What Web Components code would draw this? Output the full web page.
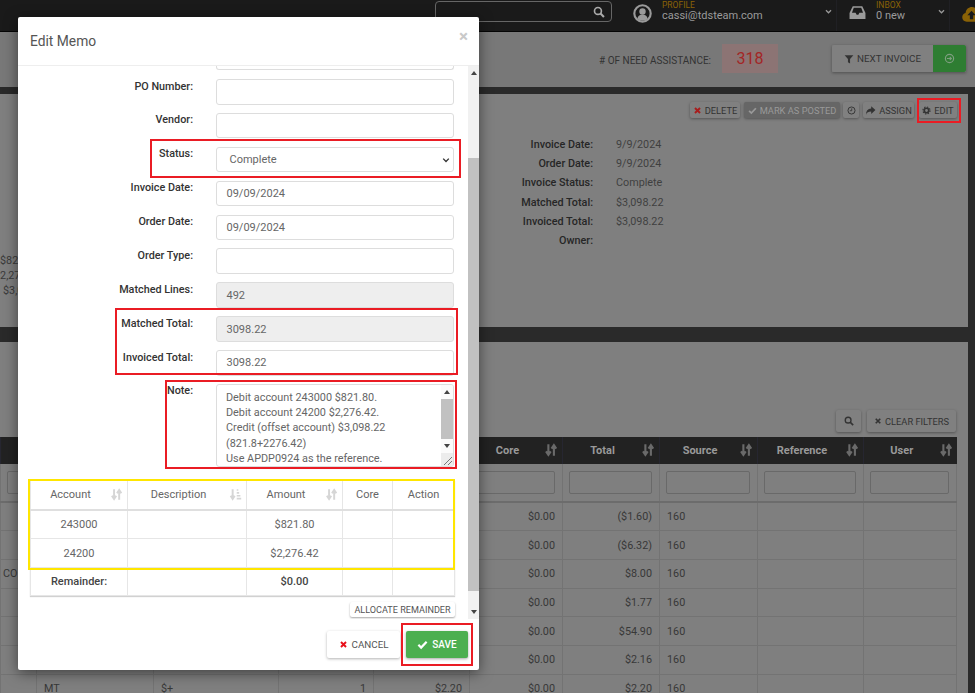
<!DOCTYPE html>
<html lang="en">
<head>
<meta charset="utf-8">
<title>Edit Memo</title>
<style>
    html, body { margin: 0; height: 693px; overflow: hidden; background: #2a2a2a; }
    body { font: 400 10.8px Roboto, "Liberation Sans", sans-serif; color: #3a3a3a; position: relative; }
</style>
</head>
<body>
<app-nav></app-nav>
<need-header></need-header>
<invoice-card></invoice-card>
<lines-card></lines-card>
<memo-modal></memo-modal>

<note-mark x="150" y="139" w="311" h="39"></note-mark>
<note-mark x="115" y="308" w="343" h="67"></note-mark>
<note-mark x="165" y="380" w="292" h="89"></note-mark>
<note-mark x="401" y="623" w="72" h="43"></note-mark>
<note-mark x="917" y="98" w="44" h="25"></note-mark>
<note-mark x="28" y="479" w="427" h="91" color="#ffe600"></note-mark>

<script>
const ICONS = {
    times: '<path d="M3.5 3.5l9 9M12.5 3.5l-9 9" fill="none" stroke="currentColor" stroke-width="3.4"/>',
    check: '<path d="M2 8.5l4 4 8-8.5" fill="none" stroke="currentColor" stroke-width="3.2"/>',
    filter: '<path d="M1 2h14L9.7 8v7.2L6.3 13V8z" fill="currentColor"/>',
    search: '<circle cx="6.6" cy="6.6" r="4.6" fill="none" stroke="currentColor" stroke-width="2.2"/><path d="M10 10l4.6 4.6" stroke="currentColor" stroke-width="2.8"/>',
    clock: '<circle cx="8" cy="8" r="6.3" fill="none" stroke="currentColor" stroke-width="1.7"/><path d="M8.4 4.2v4.2H5" fill="none" stroke="currentColor" stroke-width="1.5"/>',
    share: '<path d="M9 1.8l6.2 5.6L9 13V9.6c-4 0-6 1-7.6 4.6C1.4 8.6 4 5.6 9 5.2z" fill="currentColor"/>',
    gear: '<circle cx="8" cy="8" r="4" fill="none" stroke="currentColor" stroke-width="3"/><circle cx="8" cy="8" r="6.3" fill="none" stroke="currentColor" stroke-width="2" stroke-dasharray="2.5 2.45"/>',
    go: '<circle cx="8" cy="8" r="6" fill="none" stroke="currentColor" stroke-width="1.7"/><path d="M4.3 8h6.5M8.3 5.5L10.8 8l-2.5 2.5" fill="none" stroke="currentColor" stroke-width="1.5"/>',
    sort: '<path d="M5 1.5V13M2.3 9.5L5 13.5l2.7-4M11.3 14.5V3M8.6 6.5l2.7-4 2.7 4" fill="none" stroke="currentColor" stroke-width="2.4"/>',
    sortlist: '<path d="M4.5 1.5V13M2 9.5l2.5 4 2.5-4" fill="none" stroke="currentColor" stroke-width="2.4"/><path d="M9.5 2.5h2M9.5 6h3M9.5 9.5H14M9.5 13H15" stroke="currentColor" stroke-width="2"/>',
    chevron: '<path d="M3.5 5.8L8 10.3l4.5-4.5" fill="none" stroke="currentColor" stroke-width="2.2"/>',
    user: '<circle cx="8" cy="8" r="6.9" fill="none" stroke="currentColor" stroke-width="1.8"/><circle cx="8" cy="6.3" r="2.7" fill="currentColor"/><path d="M3.6 12.4c.6-2.6 2.3-3.5 4.4-3.5s3.800.9 4.400 3.500c-2.400 2.200-6.400 2.200-8.800 0z" fill="currentColor"/>',
    inbox: '<path d="M3.5 2h9l3 6.500V14H.5V8.500zM4.500 3.500L2.800 8.200h3.400l1 1.800h1.600l1-1.800h3.400l-1.700-4.700z" fill="currentColor" fill-rule="evenodd"/>',
    cloud: '<path d="M4 14C1.800 14 .2 12.400.2 10.300c0-1.800 1.100-3.200 2.800-3.600C3.300 3.600 5.600 1.700 8.400 1.700c2.500 0 4.600 1.600 5.300 3.900 1.300.5 2.200 2 2.200 3.900 0 2.600-1.700 4.500-4 4.500z" fill="currentColor"/><path d="M8 4.800L11.500 8.600H9.400V12H6.600V8.600H4.500z" fill="#1a1a1a"/>'
};

function icon(name, size, color) {
    return `<svg viewBox="0 0 16 16" width="${size}" height="${size}" style="display:block;flex:none;color:${color || 'currentColor'}" aria-hidden="true">${ICONS[name]}</svg>`;
}

class NoteMark extends HTMLElement {
    constructor() {
        super();
        this.attachShadow({ mode: 'open' });
    }

    connectedCallback() {
        const g = (n) => this.getAttribute(n);
        this.shadowRoot.innerHTML = `
            <style>
                :host {
                    position: absolute;
                    z-index: 5;
                    box-sizing: border-box;
                    left: ${g('x')}px;
                    top: ${g('y')}px;
                    width: ${g('w')}px;
                    height: ${g('h')}px;
                    border: 2px solid ${g('color') || '#ea1c24'};
                    pointer-events: none;
                }
            </style>`;
    }
}

class UiBtn extends HTMLElement {
    constructor() {
        super();
        this.attachShadow({ mode: 'open' });
    }

    connectedCallback() {
        const name = this.getAttribute('icon');
        const size = this.getAttribute('size') || 9;
        const tint = this.getAttribute('tint');
        this.shadowRoot.innerHTML = `
            <style>
                :host {
                    display: inline-flex;
                    align-items: center;
                    justify-content: center;
                    gap: 3px;
                    box-sizing: border-box;
                    white-space: nowrap;
                    font-size: 9.3px;
                    border-radius: 2px;
                    color: var(--btn-fg, #333);
                    background: var(--btn-bg, #808080);
                    box-shadow: var(--btn-shadow, 0 1px 3px rgba(0,0,0,.35));
                }
            </style>
            ${name ? icon(name, size, tint) : ''}<slot></slot>`;
    }
}

class AppNav extends HTMLElement {
    constructor() {
        super();
        this.attachShadow({ mode: 'open' });
    }

    connectedCallback() {
        this.shadowRoot.innerHTML = `
            <style>
                :host {
                    display: flex;
                    box-sizing: border-box;
                    height: 32px;
                    padding-left: 435px;
                    background: #1a1a1a;
                    border-bottom: 1px solid #050505;
                    color: #9a9a9a;
                    overflow: hidden;
                }
                .search {
                    box-sizing: border-box;
                    flex: none;
                    width: 177px;
                    height: 21px;
                    margin: 1px 8px 0 0;
                    padding-right: 6px;
                    border: 1px solid #666;
                    border-radius: 4px;
                    display: flex;
                    align-items: center;
                    justify-content: flex-end;
                    color: #aaa;
                }
                .sec {
                    box-sizing: border-box;
                    flex: none;
                    display: flex;
                    align-items: flex-start;
                    border-right: 1px solid #202024;
                }
                .profile { width: 217px; padding: 4px 0 0 13px; }
                .inbox { width: 113px; padding: 4px 0 0 12px; }
                .cloud { padding: 5px 0 0 12px; color: #8a6206; border: 0; }
                .text { margin-left: 10px; flex: 1; }
                .small { font-size: 8.5px; line-height: 9px; color: #8a6206; margin-top: -4px; padding-top: .5px; }
                .big { font-size: 11px; line-height: 13px; margin-top: -.5px; }
                .chev { margin: 3px 3px 0 0; }
            </style>
            <div class="search">${icon('search', 12)}</div>
            <div class="sec profile">
                ${icon('user', 19)}
                <div class="text"><div class="small">PROFILE</div><div class="big">cassi@tdsteam.com</div></div>
                <div class="chev">${icon('chevron', 9)}</div>
            </div>
            <div class="sec inbox">
                ${icon('inbox', 17)}
                <div class="text"><div class="small">INBOX</div><div class="big">0 new</div></div>
                <div class="chev">${icon('chevron', 9)}</div>
            </div>
            <div class="sec cloud">${icon('cloud', 19)}</div>`;
    }
}

class NeedHeader extends HTMLElement {
    constructor() {
        super();
        this.attachShadow({ mode: 'open' });
    }

    connectedCallback() {
        this.shadowRoot.innerHTML = `
            <style>
                :host {
                    display: flex;
                    align-items: center;
                    justify-content: flex-end;
                    box-sizing: border-box;
                    height: 55px;
                    padding: 0 9px 2px 0;
                    background: #787878;
                }
                .lbl { font-size: 10px; color: #333; margin: 3px 11px 0 0; }
                .count {
                    width: 56px;
                    height: 29px;
                    margin-right: 54px;
                    display: flex;
                    align-items: center;
                    justify-content: center;
                    background: #8c7474;
                    color: #a32626;
                    font-size: 16px;
                }
                .group { display: flex; box-shadow: 0 1px 3px rgba(0,0,0,.35); }
                .next { width: 101px; height: 27px; font-size: 9.8px; --btn-shadow: none; border-radius: 2px 0 0 2px; }
                .go { width: 33px; height: 27px; --btn-shadow: none; --btn-bg: #2e7d32; --btn-fg: #7f9f80; border-radius: 0 2px 2px 0; }
            </style>
            <span class="lbl"># OF NEED ASSISTANCE:</span>
            <span class="count">318</span>
            <div class="group">
                <ui-btn class="next" icon="filter" size="10">NEXT INVOICE</ui-btn>
                <ui-btn class="go" icon="go" size="11"></ui-btn>
            </div>`;
    }
}

class InvoiceCard extends HTMLElement {
    constructor() {
        super();
        this.attachShadow({ mode: 'open' });
    }

    connectedCallback() {
        const info = [
            ['Invoice Date:', '9/9/2024'],
            ['Order Date:', '9/9/2024'],
            ['Invoice Status:', 'Complete'],
            ['Matched Total:', '$3,098.22'],
            ['Invoiced Total:', '$3,098.22'],
            ['Owner:', '']
        ];
        this.shadowRoot.innerHTML = `
            <style>
                :host {
                    display: block;
                    box-sizing: border-box;
                    height: 233px;
                    margin: 7px 7px 0 0;
                    padding: 8px 11px 0 0;
                    background: #7f7f7f;
                    overflow: hidden;
                }
                .tools { display: flex; justify-content: flex-end; gap: 4px; }
                ui-btn { height: 16px; }
                ui-btn.del { width: 50px; }
                ui-btn.off { width: 96px; --btn-bg: #666; --btn-fg: #999; }
                ui-btn.clock { width: 16px; margin-left: -1px; }
                ui-btn.assign { width: 51px; }
                ui-btn.edit { width: 38px; margin-left: 1px; }
                .info {
                    display: grid;
                    grid-template-columns: 593px 1fr;
                    column-gap: 23px;
                    grid-auto-rows: 19.3px;
                    align-items: center;
                    margin-top: 16.7px;
                }
                .k { text-align: right; font-weight: 500; color: #262626; }
                .v { color: #3f3f3f; }
                .totals { margin-top: 3px; line-height: 15px; white-space: nowrap; color: #3a3a3a; }
                .totals div:nth-child(2) { margin-left: -6px; }
                .totals div:nth-child(3) { margin-left: 3px; }
            </style>
            <div class="tools">
                <ui-btn class="del" icon="times" tint="#a81c1c">DELETE</ui-btn>
                <ui-btn class="off" icon="check">MARK AS POSTED</ui-btn>
                <ui-btn class="clock" icon="clock"></ui-btn>
                <ui-btn class="assign" icon="share" size="11">ASSIGN</ui-btn>
                <ui-btn class="edit" icon="gear">EDIT</ui-btn>
            </div>
            <div class="info">
                ${info.map(([k, v]) => `<div class="k">${k}</div><div class="v">${v}</div>`).join('')}
            </div>
            <div class="totals"><div>$821.80</div><div>$2,276.42</div><div>$3,098.22</div></div>`;
    }
}

class LinesCard extends HTMLElement {
    constructor() {
        super();
        this.attachShadow({ mode: 'open' });
    }

    connectedCallback() {
        const widths = [36, 117, 125, 95, 96, 93, 97, 98, 106, 93];
        const heads = ['', '', '', '', '', 'Core', 'Total', 'Source', 'Reference', 'User'];
        const rows = [
            ['', '', '', '', '', '$0.00', '($1.60)', '160'],
            ['', '', '', '', '', '$0.00', '($6.32)', '160'],
            ['CO', '', '', '', '', '$0.00', '$8.00', '160'],
            ['', '', '', '', '', '$0.00', '$1.77', '160'],
            ['', '', '', '', '', '$0.00', '$54.90', '160'],
            ['', '', '', '', '', '$0.00', '$2.16', '160'],
            ['', 'MT', '$+', '1', '$2.20', '$0.00', '$2.20', '160']
        ];
        this.shadowRoot.innerHTML = `
            <style>
                :host {
                    display: block;
                    box-sizing: border-box;
                    height: 351px;
                    margin: 15px 7px 0 0;
                    padding: 68px 12px 0 0;
                    background: #7f7f7f;
                    overflow: hidden;
                }
                .tools { display: flex; justify-content: flex-end; gap: 6px; height: 22px; margin-bottom: 5px; }
                ui-btn.find { width: 25px; }
                ui-btn.clear { width: 89px; }
                table { border-collapse: collapse; table-layout: fixed; width: 956px; }
                th {
                    height: 27px;
                    padding: 0 17px 0 0;
                    background: #222;
                    color: #999;
                    font-size: 11px;
                    font-weight: 700;
                    text-align: center;
                    border-left: 1px solid #262630;
                    position: relative;
                }
                th svg { position: absolute; right: 4px; top: 6px; }
                .filters td { height: 38px; padding: 0 7px 0 6px; border: 1px solid #737373; border-bottom: 2px solid #6c6c6c; border-top: 0; box-sizing: border-box; }
                .filters div { height: 23px; box-sizing: border-box; border: 1px solid #696969; border-radius: 2px; }
                .row td {
                    height: 28.7px;
                    box-sizing: border-box;
                    padding: 0 7px;
                    border: 1px solid #737373;
                    color: #383838;
                    font-size: 10.8px;
                    white-space: nowrap;
                }
                .row td.r { text-align: right; }
                .row td:first-child { padding-left: 2px; padding-right: 0; overflow: hidden; }
            </style>
            <div class="tools">
                <ui-btn class="find" icon="search" size="10"></ui-btn>
                <ui-btn class="clear" icon="times" size="8">CLEAR FILTERS</ui-btn>
            </div>
            <table>
                <colgroup>${widths.map((w) => `<col style="width:${w}px">`).join('')}</colgroup>
                <tr>${heads.map((h) => `<th>${h}${h ? icon('sort', 14, '#6a6a6a') : ''}</th>`).join('')}</tr>
                <tr class="filters">${heads.map(() => '<td><div></div></td>').join('')}</tr>
                ${rows.map((r) => `<tr class="row">${widths.map((w, i) => `<td class="${i >= 3 && i <= 6 ? 'r' : ''}">${r[i] || ''}</td>`).join('')}</tr>`).join('')}
            </table>`;
    }
}

class FakeScrollbar extends HTMLElement {
    constructor() {
        super();
        this.attachShadow({ mode: 'open' });
    }

    connectedCallback() {
        const top = this.getAttribute('thumb-top');
        const bottom = this.getAttribute('thumb-bottom');
        this.shadowRoot.innerHTML = `
            <style>
                :host { display: flex; flex-direction: column; flex: none; width: 11px; background: #f1f1f1; }
                .arrow { flex: none; height: 14px; display: flex; justify-content: center; align-items: center; }
                .up { width: 0; height: 0; border: 3.5px solid transparent; border-top: 0; border-bottom: 4px solid #444; }
                .down { width: 0; height: 0; border: 3.5px solid transparent; border-bottom: 0; border-top: 4px solid #444; }
                .track { flex: 1; padding: ${top}px 0 ${bottom}px; display: flex; }
                .thumb { flex: 1; background: #c1c1c1; }
            </style>
            <div class="arrow"><div class="up"></div></div>
            <div class="track"><div class="thumb"></div></div>
            <div class="arrow"><div class="down"></div></div>`;
    }
}

class MemoField extends HTMLElement {
    constructor() {
        super();
        this.attachShadow({ mode: 'open' });
    }

    connectedCallback() {
        const label = this.getAttribute('label');
        const chev = this.hasAttribute('select') ? icon('chevron', 10, '#333') : '';
        this.shadowRoot.innerHTML = `
            <style>
                :host { display: grid; grid-template-columns: 163px 238px; column-gap: 23px; }
                .lbl { text-align: right; font-weight: 500; color: #333; line-height: 14px; padding-top: .5px; }
                .box {
                    box-sizing: border-box;
                    height: 25.6px;
                    padding: 0 2px 0 9.5px;
                    border: 1px solid #ddd;
                    border-radius: 3px;
                    display: flex;
                    align-items: center;
                    justify-content: space-between;
                    color: #666;
                    font-size: 11px;
                    background: #fff;
                }
                :host([readonly]) .box { background: #eee; }
                :host([select]) .box { padding-left: 12.5px; }
            </style>
            <div class="lbl">${label}</div>
            <div class="box"><span><slot></slot></span>${chev}</div>`;
    }
}

class MemoNote extends HTMLElement {
    constructor() {
        super();
        this.attachShadow({ mode: 'open' });
    }

    connectedCallback() {
        this.shadowRoot.innerHTML = `
            <style>
                :host { display: grid; grid-template-columns: 163px 238px; column-gap: 23px; }
                .lbl { text-align: right; font-weight: 500; color: #333; line-height: 14px; }
                .box {
                    box-sizing: border-box;
                    height: 83px;
                    border: 1px solid #ddd;
                    border-radius: 3px;
                    display: flex;
                    overflow: hidden;
                }
                .text { flex: 1; padding: 4.5px 4px 0 9px; font-size: 10.85px; line-height: 15.4px; color: #666; white-space: nowrap; overflow: hidden; }
                .side { width: 12px; display: flex; flex-direction: column; }
                fake-scrollbar { flex: 1; width: 12px; background: #fbfbfb; }
                .grip { height: 13px; background: #ececec; }
                .grip svg { display: block; }
            </style>
            <div class="lbl">Note:</div>
            <div class="box">
                <div class="text">Debit account 243000 $821.80.<br>Debit account 24200 $2,276.42.<br>Credit (offset account) $3,098.22<br>(821.8+2276.42)<br>Use APDP0924 as the reference.</div>
                <div class="side">
                    <fake-scrollbar thumb-top="0" thumb-bottom="0"></fake-scrollbar>
                    <div class="grip"><svg viewBox="0 0 12 13" width="12" height="13"><path d="M3 12L11 4M7 12l4-4" stroke="#777" stroke-width="1"/></svg></div>
                </div>
            </div>`;
    }
}

class MemoLines extends HTMLElement {
    constructor() {
        super();
        this.attachShadow({ mode: 'open' });
    }

    connectedCallback() {
        const sort = (n) => `<span class="s">${icon(n, 13, '#d6d6d6')}</span>`;
        this.shadowRoot.innerHTML = `
            <style>
                :host { display: block; }
                table { border-collapse: collapse; table-layout: fixed; width: 424px; box-shadow: 0 1px 1px rgba(0,0,0,.18); }
                th, td { box-sizing: border-box; border: 1px solid #e6e6e6; text-align: center; color: #666; font-size: 11px; padding: 0; }
                th { height: 29px; font-weight: 400; position: relative; border-bottom: 2px solid #dfdfdf; }
                th.p { padding-right: 17px; }
                .s { position: absolute; right: 4px; top: 7px; }
                td { height: 29px; }
                tr.foot td { height: 28px; font-weight: 500; color: #444; }
            </style>
            <table>
                <colgroup><col style="width:97px"><col style="width:119px"><col style="width:96px"><col style="width:50px"><col style="width:62px"></colgroup>
                <tr><th class="p">Account${sort('sort')}</th><th class="p">Description${sort('sortlist')}</th><th class="p">Amount${sort('sort')}</th><th>Core</th><th>Action</th></tr>
                <tr><td>243000</td><td></td><td>$821.80</td><td></td><td></td></tr>
                <tr><td>24200</td><td></td><td>$2,276.42</td><td></td><td></td></tr>
                <tr class="foot"><td>Remainder:</td><td></td><td>$0.00</td><td></td><td></td></tr>
            </table>`;
    }
}

class MemoModal extends HTMLElement {
    constructor() {
        super();
        this.attachShadow({ mode: 'open' });
    }

    connectedCallback() {
        this.shadowRoot.innerHTML = `
            <style>
                :host {
                    position: absolute;
                    z-index: 4;
                    left: 18px;
                    top: 17px;
                    width: 461px;
                    height: 653px;
                    display: flex;
                    flex-direction: column;
                    background: #fff;
                    border-radius: 2px;
                    box-shadow: 0 3px 14px rgba(0,0,0,.5);
                }
                header {
                    flex: none;
                    box-sizing: border-box;
                    height: 49px;
                    padding: 0 11px 0 12px;
                    display: flex;
                    align-items: center;
                    justify-content: space-between;
                    border-bottom: 1px solid #eee;
                }
                h2 { margin: 0; font-size: 13.8px; font-weight: 400; color: #555; }
                .close { font-size: 17px; font-weight: 700; color: #c9c9c9; margin-top: -10px; }
                .body { flex: 1; min-height: 0; display: flex; }
                .scroll { flex: 1; padding: 0 13px 0 12px; overflow: hidden; }
                .cut {
                    box-sizing: border-box;
                    height: 4px;
                    margin-left: 186px;
                    width: 238px;
                    border: 1px solid #ddd;
                    border-top: 0;
                    border-radius: 0 0 3px 3px;
                }
                .fields { display: flex; flex-direction: column; gap: 8.3px; margin-top: 9px; }
                memo-lines { margin-top: 13px; }
                .alloc { display: flex; justify-content: flex-end; padding: 6px 0 3px; }
                .alloc ui-btn { width: 105px; height: 15px; font-size: 9.1px; --btn-bg: #fff; --btn-fg: #555; --btn-shadow: 0 1px 2px rgba(0,0,0,.35); }
                footer { flex: none; display: flex; justify-content: flex-end; gap: 6px; padding: 12px 11px 0 0; height: 39px; }
                footer ui-btn { height: 27px; gap: 4px; }
                .cancel { width: 73px; font-size: 9.8px; --btn-bg: #fff; --btn-fg: #555; --btn-shadow: 0 1px 3px rgba(0,0,0,.3); }
                .save { width: 62px; font-size: 10px; font-weight: 500; --btn-bg: #4caf50; --btn-fg: #fff; --btn-shadow: 0 1px 3px rgba(0,0,0,.35); }
            </style>
            <header><h2>Edit Memo</h2><span class="close">×</span></header>
            <div class="body">
                <div class="scroll">
                    <div class="cut"></div>
                    <div class="fields">
                        <memo-field label="PO Number:"></memo-field>
                        <memo-field label="Vendor:"></memo-field>
                        <memo-field label="Status:" select>Complete</memo-field>
                        <memo-field label="Invoice Date:">09/09/2024</memo-field>
                        <memo-field label="Order Date:">09/09/2024</memo-field>
                        <memo-field label="Order Type:"></memo-field>
                        <memo-field label="Matched Lines:" readonly>492</memo-field>
                        <memo-field label="Matched Total:" readonly>3098.22</memo-field>
                        <memo-field label="Invoiced Total:">3098.22</memo-field>
                        <memo-note></memo-note>
                    </div>
                    <memo-lines></memo-lines>
                    <div class="alloc"><ui-btn>ALLOCATE REMAINDER</ui-btn></div>
                </div>
                <fake-scrollbar thumb-top="78" thumb-bottom="14"></fake-scrollbar>
            </div>
            <footer>
                <ui-btn class="cancel" icon="times" tint="#e8101a">CANCEL</ui-btn>
                <ui-btn class="save" icon="check" size="11">SAVE</ui-btn>
            </footer>`;
    }
}

customElements.define('note-mark', NoteMark);
customElements.define('ui-btn', UiBtn);
customElements.define('fake-scrollbar', FakeScrollbar);
customElements.define('memo-field', MemoField);
customElements.define('memo-note', MemoNote);
customElements.define('memo-lines', MemoLines);
customElements.define('memo-modal', MemoModal);
customElements.define('app-nav', AppNav);
customElements.define('need-header', NeedHeader);
customElements.define('invoice-card', InvoiceCard);
customElements.define('lines-card', LinesCard);
</script>
</body>
</html>
